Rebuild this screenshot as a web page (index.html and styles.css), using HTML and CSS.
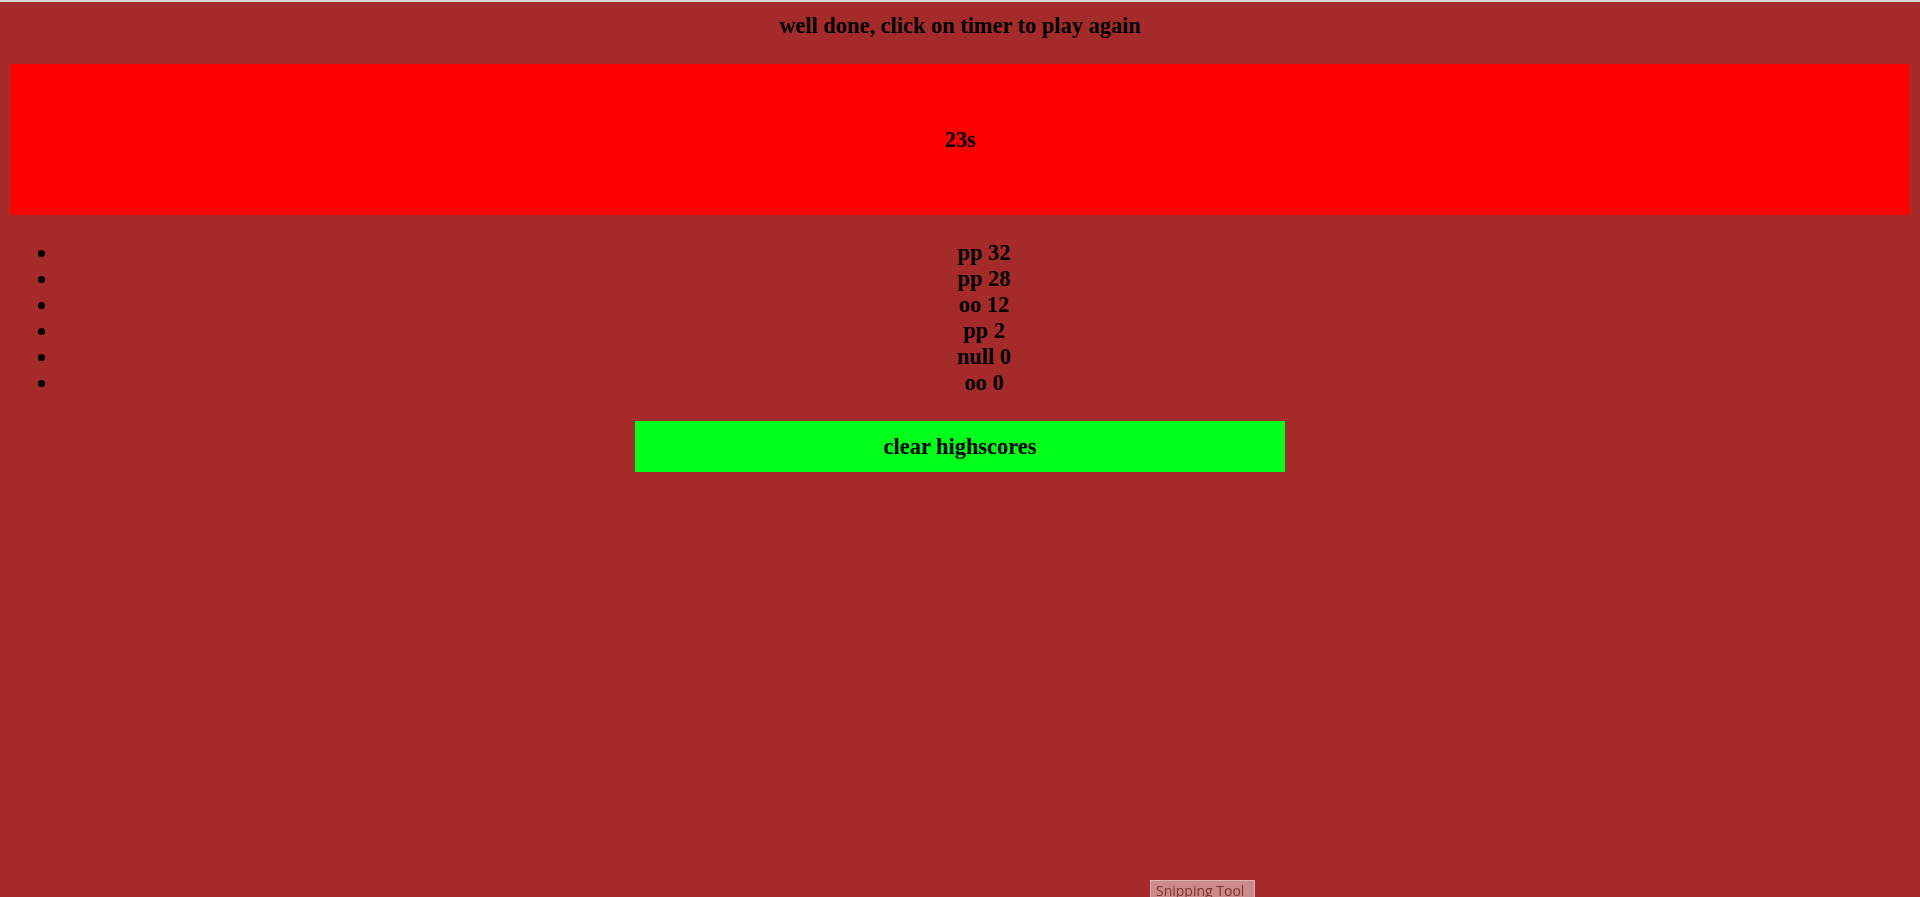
FILE: index.html
```html
<!DOCTYPE html>
<html lang="en">
<head>
<meta charset="utf-8">
<title>Timer game</title>
<link rel="stylesheet" href="styles.css">
</head>
<body>
<h3 class="status">well done, click on timer to play again</h3>
<div class="timer">23s</div>
<ul class="scores">
  <li>pp 32</li>
  <li>pp 28</li>
  <li>oo 12</li>
  <li>pp 2</li>
  <li>null 0</li>
  <li>oo 0</li>
</ul>
<div class="clear-btn">clear highscores</div>
<div class="snip-tip">Snipping Tool</div>
</body>
</html>
```
FILE: styles.css
```css
html {
  background: #a52a2a;
}
body {
  margin: 0;
  padding: 0 10px;
  border-top: 2px solid #d6d6d6;
  font-family: "Liberation Serif", "Times New Roman", serif;
  font-weight: bold;
  font-size: 22.4px;
  color: #000;
}
.status {
  margin: 0;
  padding-top: 11.4px;
  height: 26px;
  font-size: 22.4px;
  line-height: 26px;
  text-align: center;
}
.timer {
  margin-top: 24.6px;
  height: 151px;
  box-sizing: border-box;
  padding-top: 2px;
  background: #ff0000;
  display: flex;
  align-items: center;
  justify-content: center;
  line-height: 26px;
}
.scores {
  margin: 25px 0 0;
  padding-left: 48px;
  list-style: disc;
  text-align: center;
  line-height: 26px;
}
.clear-btn {
  margin: 25px auto 0;
  width: 650px;
  height: 51px;
  box-sizing: border-box;
  padding-top: 2px;
  background: #00ff1a;
  display: flex;
  align-items: center;
  justify-content: center;
  line-height: 26px;
}
.snip-tip {
  position: fixed;
  left: 1150px;
  top: 880px;
  width: 105px;
  height: 22px;
  box-sizing: border-box;
  background: rgba(255, 255, 255, 0.45);
  border: 1px solid rgba(255, 255, 255, 0.35);
  color: #7a3434;
  font-family: "Open Sans", sans-serif;
  font-weight: normal;
  font-size: 14px;
  line-height: 20px;
  padding-left: 5px;
  white-space: nowrap;
}
```
